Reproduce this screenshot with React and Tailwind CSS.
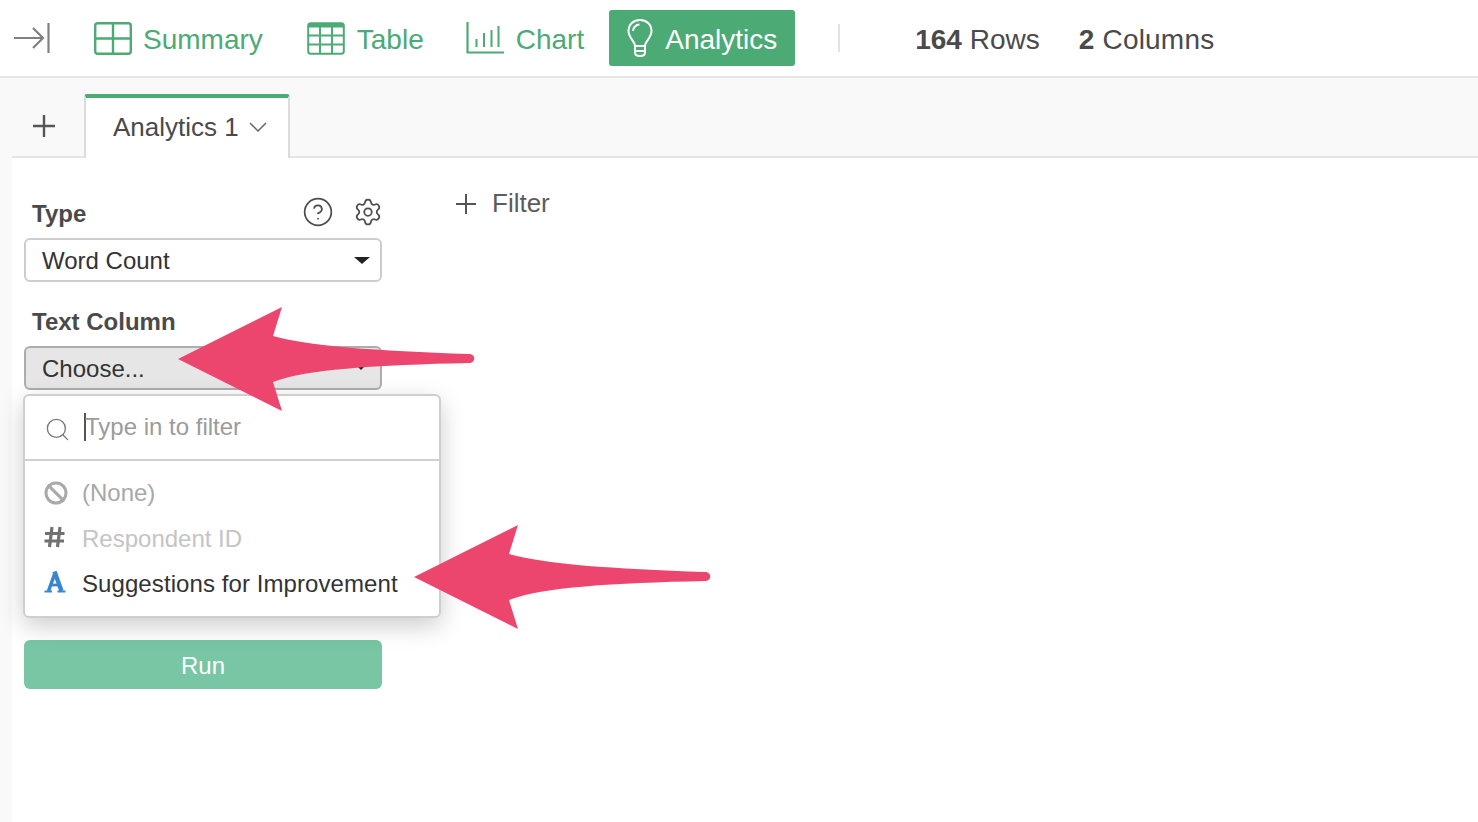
import { Settings, CircleHelp, Search, Ban } from "lucide-react";

const green = "#4caa75";

function SummaryIcon() {
  return (
    <svg width="38" height="33" viewBox="0 0 38 33" fill="none" stroke={green} strokeWidth="2.4" className="shrink-0">
      <rect x="1.2" y="1.2" width="35.6" height="30.6" rx="2.5" />
      <path d="M19 1v31M1 16.5h36" />
    </svg>
  );
}

function TableIcon() {
  return (
    <svg width="38" height="33" viewBox="0 0 38 33" fill="none" stroke={green} strokeWidth="2" className="shrink-0">
      <rect x="1.2" y="1.2" width="35.6" height="30.6" rx="2.5" />
      <path d="M1 3.5h36" strokeWidth="4" />
      <path d="M13 3v29M25 3v29M1 13.5h36M1 22.5h36" />
    </svg>
  );
}

function ChartIcon() {
  return (
    <svg width="38" height="33" viewBox="0 0 38 33" fill="none" stroke={green} strokeWidth="2" className="shrink-0">
      <path d="M1.5 0v30.5h37" strokeWidth="2.2" />
      <path d="M10.5 17v8M18 11v14M25.5 8v17M32.5 4v21" />
    </svg>
  );
}

function BulbIcon() {
  return (
    <svg width="26" height="38" viewBox="0 0 26 38" fill="none" stroke="white" strokeWidth="2" className="shrink-0">
      <path d="M8 27c0-5-6.500-8-6.500-15C1.500 5.500 6.500 1 13 1s11.500 4.500 11.500 11c0 7-6.500 10-6.500 15z" />
      <path d="M6 12c0-3.500 3-6.500 6.500-6.500" />
      <path d="M8 27v6.500c0 2 2 3.500 5 3.500s5-1.500 5-3.500V27M8 32h10" />
    </svg>
  );
}

function HashIcon() {
  return (
    <svg width="21" height="22" viewBox="0 0 21 22" fill="none" stroke="#707070" strokeWidth="3.200">
      <path d="M8 1L5.500 21M16 1L13.500 21M1 7.500h19.500M0.500 15h19.500" />
    </svg>
  );
}

function TextTypeIcon() {
  return (
    <svg width="22" height="23" viewBox="0 0 22 23" fill="none" stroke="#3a85d0">
      <path d="M11 3L4.500 21" strokeWidth="3.600" />
      <path d="M10.500 1.500L17.500 21" strokeWidth="4.400" />
      <path d="M6 15h10" strokeWidth="2.800" />
      <path d="M0.500 21.500h7.500M13.500 21.500h8" strokeWidth="2.200" />
    </svg>
  );
}

function Arrow({ className }) {
  return (
    <svg width="300" height="108" viewBox="0 0 300 108" className={className}>
      <path
        d="M1 54 L105 2 L96 31 C130 41 200 46 292 49 C299 49 299 58 292 58 C200 60 130 64 96 77 L105 106 Z"
        fill="#ec456e"
      />
    </svg>
  );
}

export default function App() {
  return (
    <div className="relative h-[822px] w-[1478px] overflow-hidden bg-white text-[#4a4a4a] font-['Liberation_Sans',Arial,sans-serif]">
      {/* top nav */}
      <div className="flex h-[78px] items-center border-b-2 border-[#e6e6e6]">
        <svg width="36" height="30" viewBox="0 0 36 30" fill="none" stroke="#808080" strokeWidth="2.2" className="ml-[14px]">
          <path d="M0 15h29M19 5l10 10-10 10" />
          <path d="M34.500 0v30" />
        </svg>
        <div className="ml-[44px] flex items-center gap-[11px] text-[28px]" style={{ color: green }}>
          <SummaryIcon />
          <span className="pt-[4px]">Summary</span>
        </div>
        <div className="ml-[44px] flex items-center gap-[12px] text-[28px]" style={{ color: green }}>
          <TableIcon />
          <span className="pt-[4px]">Table</span>
        </div>
        <div className="ml-[42px] flex items-center gap-[12px] text-[28px]" style={{ color: green }}>
          <ChartIcon />
          <span className="pt-[4px]">Chart</span>
        </div>
        <div className="ml-[25px] flex h-[56px] w-[186px] items-center gap-[12px] rounded-[3px] bg-[#4caa75] pl-[18px] text-[28px] text-white">
          <BulbIcon />
          <span className="pt-[4px]">Analytics</span>
        </div>
        <div className="ml-[43px] h-[28px] w-[2px] bg-[#e2e2e2]" />
        <div className="ml-[75px] pt-[4px] text-[28px]">
          <b>164</b> Rows
        </div>
        <div className="ml-[39px] pt-[4px] text-[28px] tracking-[0.2px]">
          <b>2</b> Columns
        </div>
      </div>

      <div className="flex h-[744px]">
        <div className="w-[12px] bg-[#f9f9f9]" />
        <div className="flex-1">
          {/* tab bar */}
          <div className="flex h-[80px] -ml-[12px] items-end bg-[#f9f9f9]">
            <div className="ml-[12px] flex h-[80px] w-[72px] items-center border-b-2 border-[#e6e6e6] pl-[20px] pt-[18px]">
              <svg width="24" height="24" viewBox="0 0 24 24" stroke="#555" strokeWidth="2.4">
                <path d="M12 1v22M1 12h22" />
              </svg>
            </div>
            <div className="flex h-[64px] w-[206px] items-center gap-[10px] rounded-t-[3px] border-x-2 border-t-4 border-x-[#dcdcdc] border-t-[#4caa75] border-b-0 bg-white pb-[2px] pl-[27px] text-[26px]">
              <span>Analytics 1</span>
              <svg width="18" height="10" viewBox="0 0 18 10" fill="none" stroke="#666" strokeWidth="1.500">
                <path d="M1 1l8 8 8-8" />
              </svg>
            </div>
            <div className="h-[2px] flex-1 bg-[#e6e6e6]" />
          </div>

          <div className="flex">
            {/* left form */}
            <div className="relative ml-[12px] w-[358px]">
              <div className="flex h-[80px] items-end justify-between pb-[10px] pl-2">
                <span className="text-[24px] font-bold leading-[28px]">Type</span>
                <div className="-mr-[1px] flex items-center gap-[19px]">
                  <CircleHelp size={32} strokeWidth={1.300} color="#4d4d4d" />
                  <Settings size={30} strokeWidth={1.400} color="#4d4d4d" />
                </div>
              </div>
              <div className="flex h-[44px] items-center justify-between rounded-[6px] border-2 border-[#cdcdcd] bg-white pl-4 pr-[10px] text-[24px] text-[#333]">
                <span className="pt-[2px]">Word Count</span>
                <span className="h-0 w-0 border-x-[8px] border-t-[7px] border-x-transparent border-t-[#222]" />
              </div>
              <div className="mt-[26px] pl-2 text-[24px] font-bold leading-[28px]">Text Column</div>
              <div className="mt-[10px] flex h-[44px] items-center justify-between rounded-[6px] border-2 border-[#adadad] bg-[#e6e6e6] pl-4 pr-[16px] text-[24px] text-[#333]">
                <span className="pt-[2px]">Choose...</span>
                <span className="h-0 w-0 border-x-[3px] border-t-[3px] border-x-transparent border-t-[#222]" />
              </div>

              {/* dropdown */}
              <div className="absolute left-[-1px] top-[236px] z-10 h-[224px] w-[418px] rounded-[6px] border-2 border-[#cfcfcf] bg-white shadow-[0_8px_24px_rgba(0,0,0,0.2)]">
                <div className="flex h-[65px] items-center border-b-2 border-[#d0d0d0] pl-[19px]">
                  <Search size={27} strokeWidth={1.200} color="#777" className="mt-1" />
                  <span className="ml-[13px] mb-[1px] h-[28px] w-[2px] bg-[#555]" />
                  <span className="-ml-[1px] pb-[2px] text-[24px] text-[#9b9b9b]">Type in to filter</span>
                </div>
                <div className="flex h-[46px] mt-[9px] items-center pl-[19px] text-[24px] text-[#a8a8a8]">
                  <span className="flex w-[38px]"><Ban size={24} strokeWidth={3} color="#a9a9a9" /></span>
                  <span>(None)</span>
                </div>
                <div className="flex h-[45px] items-center pl-[19px] text-[24px] text-[#c4c4c4]">
                  <span className="flex w-[38px] -mt-[3px]"><HashIcon /></span>
                  <span>Respondent ID</span>
                </div>
                <div className="flex h-[46px] items-center pl-[19px] text-[24px] text-[#333]">
                  <span className="flex w-[38px] -mt-[5px]"><TextTypeIcon /></span>
                  <span className="tracking-[0.08px]">Suggestions for Improvement</span>
                </div>
              </div>

              <div className="mt-[250px] flex h-[49px] items-center justify-center rounded-[6px] bg-[#78c6a3] pt-[2px] text-[24px] text-white">
                Run
              </div>
            </div>

            {/* filter */}
            <div className="ml-[73px] flex h-fit items-center gap-[15px] pt-[26px] text-[26px] text-[#5c5c5c]">
              <svg width="22" height="22" viewBox="0 0 22 22" stroke="#555" strokeWidth="2">
                <path d="M11 1v20M1 11h20" />
              </svg>
              <span>Filter</span>
            </div>
          </div>
        </div>
      </div>

      {/* annotation arrows */}
      <Arrow className="absolute left-[177px] top-[305px] z-20" />
      <Arrow className="absolute left-[413px] top-[523px] z-20" />
    </div>
  );
}
